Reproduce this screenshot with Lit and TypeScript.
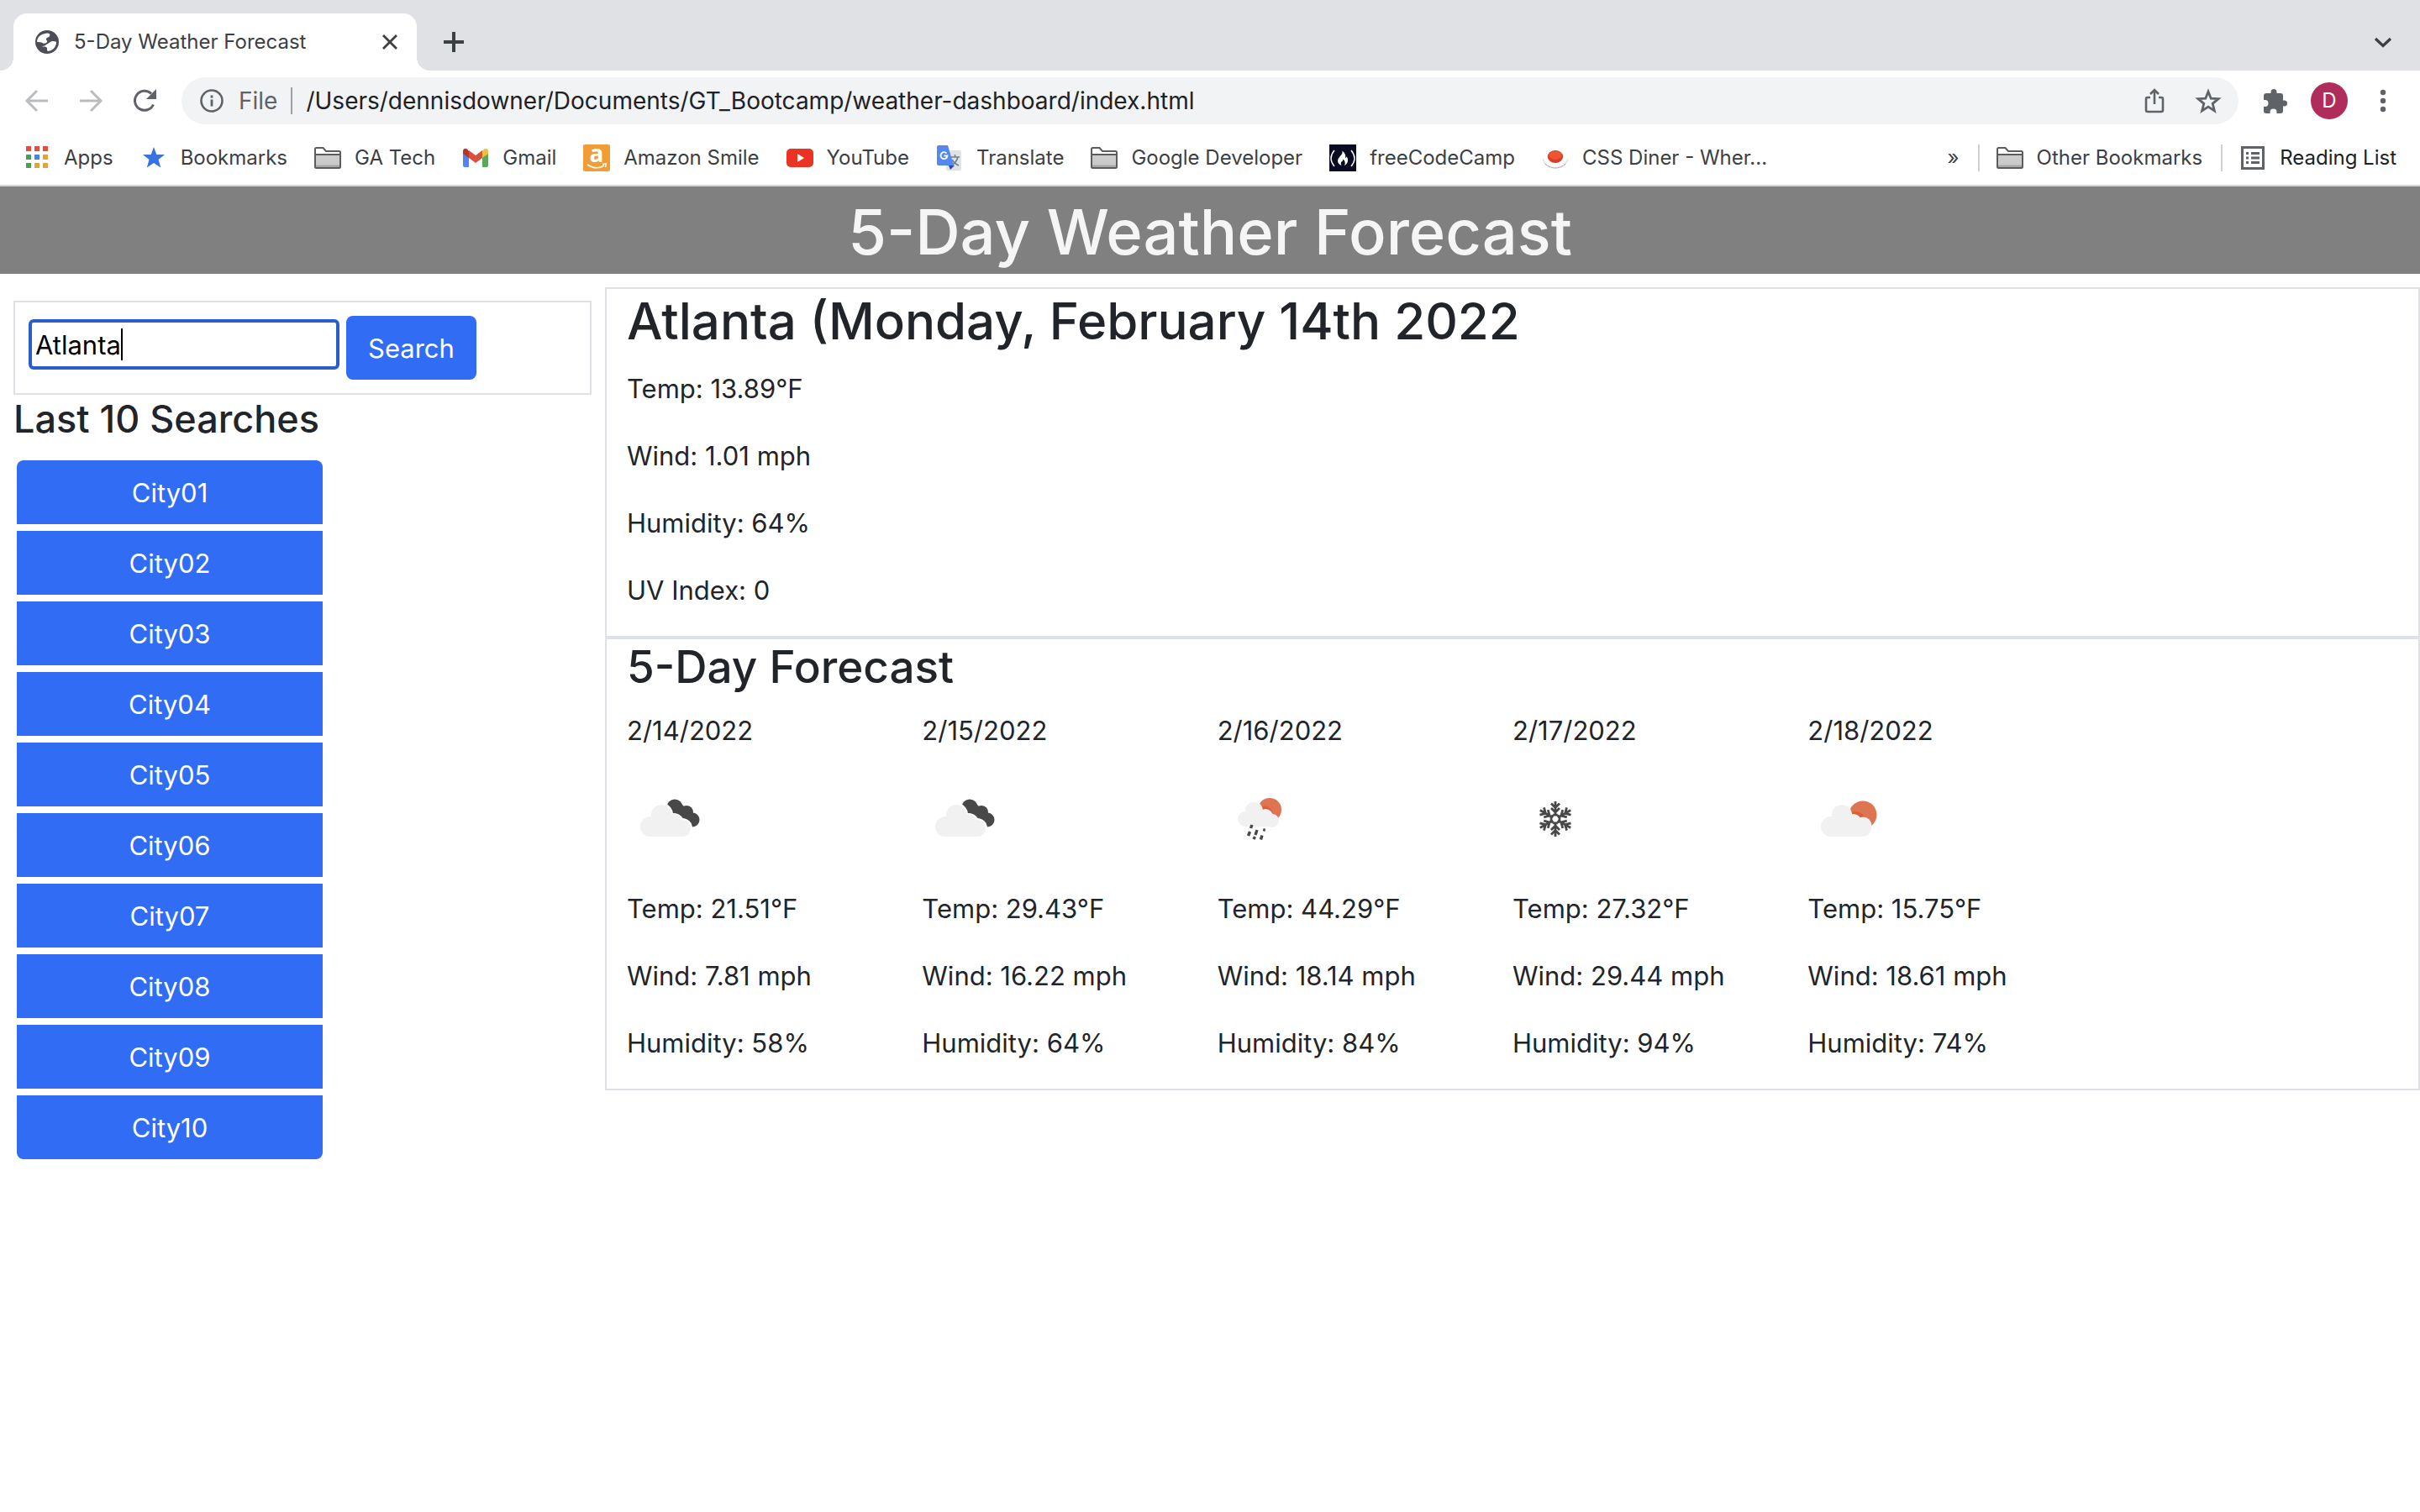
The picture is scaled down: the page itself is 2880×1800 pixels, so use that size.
import { LitElement, html, css, svg, nothing } from "lit";
import { customElement, property } from "lit/decorators.js";

const folder = svg`<path d="M2 5.5Q2 4 3.500 4H10l3.500 4H28.500Q30 8 30 9.500V26.500Q30 28 28.500 28H3.500Q2 28 2 26.500Z" fill="#fff"/><path d="M2 12H30V27H2Z" fill="#cbcbcb"/><path d="M2 24.500H30V28H2Z" fill="#a8a8a8"/><path d="M1 5.500Q1 4 2.500 4H10.500l3.500 4H29.500Q31 8 31 9.500V26.500Q31 28 29.500 28H2.500Q1 28 1 26.500ZM1 12H31" fill="none" stroke="#5c5c5c" stroke-width="2"/>`;

const puffs = svg`<g fill="#f1f1f1"><circle cx="28" cy="60" r="12"/><circle cx="41" cy="46" r="12"/><circle cx="54" cy="56" r="11"/><circle cx="66" cy="62" r="10"/><path d="M28 54h30l8 8v10H28z"/></g>`;

const icons: Record<string, unknown> = {
  apps: svg`<g fill="#e34c3f"><path d="M3 2h6v6H3zM13 2h6v6h-6zM23 2h6v6h-6z"/></g><g fill="#4e9a5c"><path d="M3 12h6v6H3zM3 22h6v6H3z"/></g><path d="M13 12h6v6h-6z" fill="#4384f0"/><path d="M23 12h6v6h-6zM13 22h6v6h-6zM23 22h6v6h-6z" fill="#e3a33b"/>`,
  star: svg`<path d="M16 3l3.300 9H29l-7.500 6 2.700 9.500L16 22l-8.200 5.500L10.500 18 3 12h9.700z" fill="#3871e0"/>`,
  folder,
  gmail: svg`<path d="M1 8v17a2 2 0 0 0 2 2h5V13z" fill="#4e86ee"/><path d="M31 8v17a2 2 0 0 1-2 2h-5V13z" fill="#5aa85a"/><path d="M24 8v8l7-5V8c0-3-3-4-5-2.500z" fill="#f1bf42"/><path d="M8 8v8l-7-5V8c0-3 3-4 5-2.500z" fill="#b8352b"/><path d="M8 7l8 6 8-6v9l-8 6-8-6z" fill="#d9503f"/>`,
  amazon: svg`<rect width="32" height="32" rx="2" fill="#f09d38"/><text x="16" y="21" text-anchor="middle" font-family="Open Sans, sans-serif" font-weight="700" font-size="28" fill="#fff">a</text><path d="M5 24q11 7 20 1" fill="none" stroke="#fff" stroke-width="1.600"/><path d="M23 23.500l4.500-.5-1 4" fill="none" stroke="#fff" stroke-width="1.300"/>`,
  youtube: svg`<rect y="5" width="32" height="22" rx="5" fill="#ea3323"/><path d="M13 11l8 5-8 5z" fill="#fff"/>`,
  translate: svg`<rect x="12" y="7" width="18" height="24" rx="2" fill="#e2e2e2"/><path d="M17 15h11M22.500 12v3M26 15q-2 7-8 10M19 18q3 5 8 7" fill="none" stroke="#6b7f90" stroke-width="1.600"/><path d="M15 25h7l-5 5z" fill="#3a3cc0"/><path d="M3 1h11l7 24H3q-2 0-2-2V3q0-2 2-2z" fill="#5488ee"/><path d="M12.500 10.500a4 4 0 1 0 1 3H9.500" fill="none" stroke="#fff" stroke-width="1.800"/>`,
  fcc: svg`<rect width="32" height="32" fill="#0a0a23"/><path d="M6 7q-8 9.500 0 19M26 7q8 9.500 0 19" fill="none" stroke="#fff" stroke-width="1.500"/><path d="M15.500 7.500q4.500 4 3.500 8 1.200.8 1.600-1.200Q23 18 21.500 21.500 20.500 24 18 25q2-4-1.500-7.500Q16 20 14.500 20.500 13 22 14.500 25 10 23 10 19.500q0-2.500 2.800-5.500 3.200-3 2.700-6.500z" fill="#fff"/>`,
  plate: svg`<path d="M1 17q3 11 15 11t15-11" fill="none" stroke="#e4e4e4" stroke-width="1.500"/><path d="M4 23q12 10 24 0" fill="none" stroke="#a8a8a8" stroke-width="1" stroke-dasharray="3 1"/><ellipse cx="16" cy="14.500" rx="9.200" ry="7.500" fill="#d93f25"/><ellipse cx="16" cy="13" rx="7.500" ry="5" fill="#ee5534"/>`,
  list: svg`<path d="M3.500 3.500h25v25h-25z" fill="none" stroke="#5f6368" stroke-width="3"/><path d="M8 9h3v3H8zM14 9h10v3H14zM8 14.500h3v3H8zM14 14.500h10v3H14zM8 20h3v3H8zM14 20h10v3H14z" fill="#5f6368"/>`,
  globe: svg`<circle cx="16" cy="16" r="14" fill="#4c4e55"/><path d="M16 5.500c3 0 4 1 3 3.500-1 2-3 1-4 3s2 2 1 4-3 1-4 2c-2-2-6-2-8-2 0-5 4-10 12-10.500z" fill="#fff"/><path d="M10 21c3 .5 5-2 7-3s3-3 6-3 4 1 4 1c0 6-4 10-10 11-2-1 0-4-2-5s-4 0-5-1z" fill="#fff"/>`,
  close: svg`<path d="M8 8l16 16M24 8L8 24" stroke="#3c4043" stroke-width="2.800"/>`,
  plus: svg`<path d="M16 4v24M4 16h24" stroke="#3c4043" stroke-width="4"/>`,
  chevron: svg`<path d="M7 12l9 8.500L25 12" fill="none" stroke="#3c4043" stroke-width="3.300"/>`,
  back: svg`<path d="M29 16H5M16 4L4 16l12 12" fill="none" stroke="#babcbe" stroke-width="3"/>`,
  forward: svg`<path d="M3 16h24M16 4l12 12-12 12" fill="none" stroke="#babcbe" stroke-width="3"/>`,
  reload: svg`<path d="M26.500 20.500A11.500 11.500 0 1 1 24 7.500" fill="none" stroke="#5f6368" stroke-width="3"/><path d="M30 2v12H18z" fill="#5f6368"/>`,
  info: svg`<circle cx="16" cy="16" r="12.500" fill="none" stroke="#5f6368" stroke-width="2.600"/><path d="M14.600 14.500h2.800v8h-2.800zM14.600 9.500h2.800v3h-2.800z" fill="#5f6368"/>`,
  share: svg`<path d="M11 12H8q-2 0-2 2v13q0 2 2 2h16q2 0 2-2V14q0-2-2-2h-3M16 20V4M11 8l5-5 5 5" fill="none" stroke="#5f6368" stroke-width="2.600"/>`,
  outlineStar: svg`<path d="M16 5l3.200 8.200 8.800.5-6.800 5.600L23.400 28 16 23.200 8.600 28l2.200-8.700L4 13.700l8.800-.5z" fill="none" stroke="#5f6368" stroke-width="2.800"/>`,
  puzzle: svg`<path d="M2 10q0-3 3-3h5.500V5.500a3.500 3.500 0 0 1 7 0V7H22q3 0 3 3v5.500h1.500a3.500 3.500 0 0 1 0 7H25V28q0 3-3 3h-4.500v-1.500a4 4 0 0 0-8 0V31H5q-3 0-3-3v-5h1.500a4 4 0 0 0 0-8H2z" fill="#5f6368"/>`,
  menu: svg`<g fill="#5f6368"><circle cx="16" cy="6" r="3.200"/><circle cx="16" cy="16" r="3.200"/><circle cx="16" cy="26" r="3.200"/></g>`,
  clouds: svg`<g fill="#484848"><circle cx="57" cy="37" r="9.500"/><circle cx="71" cy="43" r="8"/><circle cx="78" cy="52" r="8.500"/><path d="M50 42l12-12 18 18-8 12z"/></g><g fill="#fff"><circle cx="41" cy="46" r="14"/><circle cx="56" cy="56" r="12"/><circle cx="66" cy="62" r="12"/></g>${puffs}`,
  partly: svg`<circle cx="66" cy="46" r="16.500" fill="#dd7553"/><circle cx="57" cy="54" r="12" fill="#d9603a"/>${puffs}<circle cx="66" cy="59" r="10.500" fill="#f1f1f1"/>`,
  rain: svg`<circle cx="62" cy="40" r="14" fill="#dd7553"/><circle cx="56" cy="45" r="9.500" fill="#d9603a"/><g fill="#f1f1f1"><circle cx="33" cy="51" r="9"/><circle cx="43.500" cy="41" r="10.500"/><circle cx="57" cy="48" r="9"/><circle cx="65" cy="53" r="8"/><path d="M33 48h32v12H33z"/></g><g stroke="#484848" stroke-width="3.400"><path d="M41 58l-1.500 4M38.500 66l-2 5M47 64l-2 6M44.500 72l-1.500 3M53 70.500l-1.500 5"/><path d="M56 62.500l-1 3" stroke-width="2.600"/></g>`,
  snow: svg`<g fill="none" stroke="#484848" stroke-width="2.800">${[0, 60, 120, 180, 240, 300].map(
    (a) => svg`<g transform="rotate(${a} 51 51)"><path d="M51 47V30M46 32.500l5 5 5-5M46 38l5 5 5-5M48.200 46.200h5.600"/></g>`
  )}</g>`,
};

@customElement("ui-icon")
export class UiIcon extends LitElement {
  @property() name = "";
  @property({ type: Number }) box = 32;
  static styles = css`
    :host { display: block; flex: none; width: 32px; height: 32px; }
    :host([box="100"]) { width: 100px; height: 100px; }
    svg { display: block; width: 100%; height: 100%; overflow: visible; }
  `;
  render() {
    return html`<svg viewBox="0 0 ${this.box} ${this.box}" aria-hidden="true">${icons[this.name] ?? nothing}</svg>`;
  }
}

const bookmarks = [
  ["apps", "Apps"],
  ["star", "Bookmarks"],
  ["folder", "GA Tech"],
  ["gmail", "Gmail"],
  ["amazon", "Amazon Smile"],
  ["youtube", "YouTube"],
  ["translate", "Translate"],
  ["folder", "Google Developer"],
  ["fcc", "freeCodeCamp"],
  ["plate", "CSS Diner - Wher..."],
];

@customElement("browser-chrome")
export class BrowserChrome extends LitElement {
  static styles = css`
    :host { display: block; color: #3c4043; font-size: 24px; border-bottom: 2px solid #d6d6d6; }
    button { font: inherit; color: inherit; border: 0; padding: 0; background: none; display: block; flex: none; }
    a { color: inherit; text-decoration: none; }
    .strip { display: flex; align-items: center; height: 68px; padding: 16px 28px 0 16px; background: #dfe1e5; }
    .tab { position: relative; display: flex; align-items: center; width: 480px; height: 68px; box-sizing: border-box; padding: 0 16px 0 24px; gap: 16px; background: #fff; border-radius: 16px 16px 0 0; margin-right: 28px; }
    .tab::before, .tab::after { content: ""; position: absolute; bottom: 0; width: 16px; height: 16px; }
    .tab::before { left: -16px; background: radial-gradient(circle at 0 0, #dfe1e5 16px, #fff 16px); }
    .tab::after { right: -16px; background: radial-gradient(circle at 100% 0, #dfe1e5 16px, #fff 16px); }
    .name { flex: 1; }
    .push { margin-left: auto; }
    .toolbar { display: flex; align-items: center; height: 72px; padding: 0 28px; gap: 32px; }
    .omni { flex: 1; display: flex; align-items: center; height: 56px; margin: 0 -4px; padding: 0 20px; gap: 16px; border-radius: 28px; background: #f1f3f4; color: #5f6368; font-size: 28px; }
    .omni input { flex: 1; min-width: 0; height: 56px; border: 0; background: none; padding: 0; font: inherit; color: #202124; outline: 0; }
    .bar { width: 2px; height: 32px; background: #9aa0a6; }
    .omni button + button { margin-left: 16px; }
    .avatar { width: 44px; height: 44px; margin: 0 -6px; border-radius: 50%; background: #b02c5a; color: #fff; text-align: center; font-size: 24px; line-height: 44px; }
    .marks { display: flex; align-items: center; height: 64px; padding: 0 28px; gap: 32px; white-space: nowrap; }
    .mark { display: flex; align-items: center; gap: 16px; }
    .rule { width: 2px; height: 32px; background: #d0d0d0; margin: 0 -12px 0 -10px; }
    .dark { color: #202124; }
  `;
  render() {
    const button = (name: string, label: string, cls = "") =>
      html`<button class=${cls} aria-label=${label}><ui-icon name=${name}></ui-icon></button>`;
    return html`
      <div class="strip">
        <div class="tab">
          <ui-icon name="globe"></ui-icon><span class="name">5-Day Weather Forecast</span>
          ${button("close", "Close tab")}
        </div>
        ${button("plus", "New tab")} ${button("chevron", "Search tabs", "push")}
      </div>
      <div class="toolbar">
        ${button("back", "Back")} ${button("forward", "Forward")} ${button("reload", "Reload")}
        <div class="omni">
          <ui-icon name="info"></ui-icon><span>File</span><span class="bar"></span>
          <input aria-label="Address" value="/Users/dennisdowner/Documents/GT_Bootcamp/weather-dashboard/index.html" />
          ${button("share", "Share")} ${button("outlineStar", "Bookmark this page")}
        </div>
        ${button("puzzle", "Extensions")}
        <button class="avatar">D</button>
        ${button("menu", "Menu")}
      </div>
      <nav class="marks">
        ${bookmarks.map(([i, t]) => html`<a class="mark" href="#"><ui-icon name=${i}></ui-icon>${t}</a>`)}
        <button class="push">»</button>
        <span class="rule"></span>
        <a class="mark" href="#"><ui-icon name="folder"></ui-icon>Other Bookmarks</a>
        <span class="rule"></span>
        <a class="mark dark" href="#"><ui-icon name="list"></ui-icon>Reading List</a>
      </nav>
    `;
  }
}

const days = [
  ["2/14/2022", "clouds", "21.51", "7.81", "58"],
  ["2/15/2022", "clouds", "29.43", "16.22", "64"],
  ["2/16/2022", "rain", "44.29", "18.14", "84"],
  ["2/17/2022", "snow", "27.32", "29.44", "94"],
  ["2/18/2022", "partly", "15.75", "18.61", "74"],
];
const cities = Array.from({ length: 10 }, (_, i) => `City${String(i + 1).padStart(2, "0")}`);

@customElement("app-root")
export class AppRoot extends LitElement {
  static styles = css`
    :host { display: block; min-height: 100vh; background: #fff; color: #212529; font-family: Inter, "Liberation Sans", sans-serif; font-size: 31px; line-height: 48px; }
    h1, h2, h3, h4, p { margin: 0; font-weight: 500; }
    p { font-weight: 400; padding-top: 2px; margin-bottom: 30px; }
    .title { background: #808080; color: #f5f5f5; text-align: center; font-size: 74px; line-height: 96px; padding: 6px 0 2px; }
    .page { display: grid; grid-template-columns: 1fr 3fr; align-items: start; padding-top: 16px; }
    .side { padding: 16px 16px 0; }
    .search { display: flex; align-items: flex-start; gap: 8px; border: 2px solid #dee2e6; padding: 16px; }
    .field { position: relative; margin-top: 4px; }
    .field input { display: block; box-sizing: border-box; width: 370px; height: 60px; border: 4px solid #2a5fc9; border-radius: 6px; padding: 0 4px; font: inherit; color: #000; caret-color: transparent; outline: 0; background: #fff; }
    .caret { position: absolute; left: 110px; top: 11px; width: 2px; height: 38px; background: #000; }
    .blue { height: 76px; border: 0; padding: 2px 26px 0; border-radius: 8px; background: #316cf4; color: #fff; font: inherit; }
    .last { font-size: 45px; line-height: 58px; margin-bottom: 16px; }
    .cities { display: grid; gap: 8px; width: 364px; padding: 4px; }
    .cities .blue { border-radius: 0; }
    .cities .blue:first-child { border-radius: 8px 8px 0 0; }
    .cities .blue:last-child { border-radius: 0 0 8px 8px; }
    .panel { border: 2px solid #dee2e6; padding: 0 24px; }
    .now { font-size: 60px; line-height: 77px; margin-bottom: 16px; }
    .five { font-size: 53px; line-height: 67px; margin-bottom: 16px; }
    .days { display: grid; grid-template-columns: repeat(6, 1fr); white-space: nowrap; }
    .days ui-icon { margin-bottom: 32px; }
  `;
  render() {
    return html`
      <browser-chrome></browser-chrome>
      <h1 class="title">5-Day Weather Forecast</h1>
      <div class="page">
        <aside class="side">
          <form class="search" @submit=${(e: Event) => e.preventDefault()}>
            <div class="field">
              <input id="city" aria-label="City" value="Atlanta" />
              <span class="caret"></span>
            </div>
            <button class="blue">Search</button>
          </form>
          <h4 class="last">Last 10 Searches</h4>
          <div class="cities">${cities.map((c) => html`<button class="blue">${c}</button>`)}</div>
        </aside>
        <main>
          <section class="panel">
            <h2 class="now">Atlanta (Monday, February 14th 2022</h2>
            <p>Temp: 13.89°F</p>
            <p>Wind: 1.01 mph</p>
            <p>Humidity: 64%</p>
            <p>UV Index: 0</p>
          </section>
          <section class="panel">
            <h3 class="five">5-Day Forecast</h3>
            <div class="days">
              ${days.map(
                ([d, i, t, w, h]) => html`<article>
                  <p>${d}</p>
                  <ui-icon name=${i} box="100"></ui-icon>
                  <p>Temp: ${t}°F</p>
                  <p>Wind: ${w} mph</p>
                  <p>Humidity: ${h}%</p>
                </article>`
              )}
            </div>
          </section>
        </main>
      </div>
    `;
  }
}
